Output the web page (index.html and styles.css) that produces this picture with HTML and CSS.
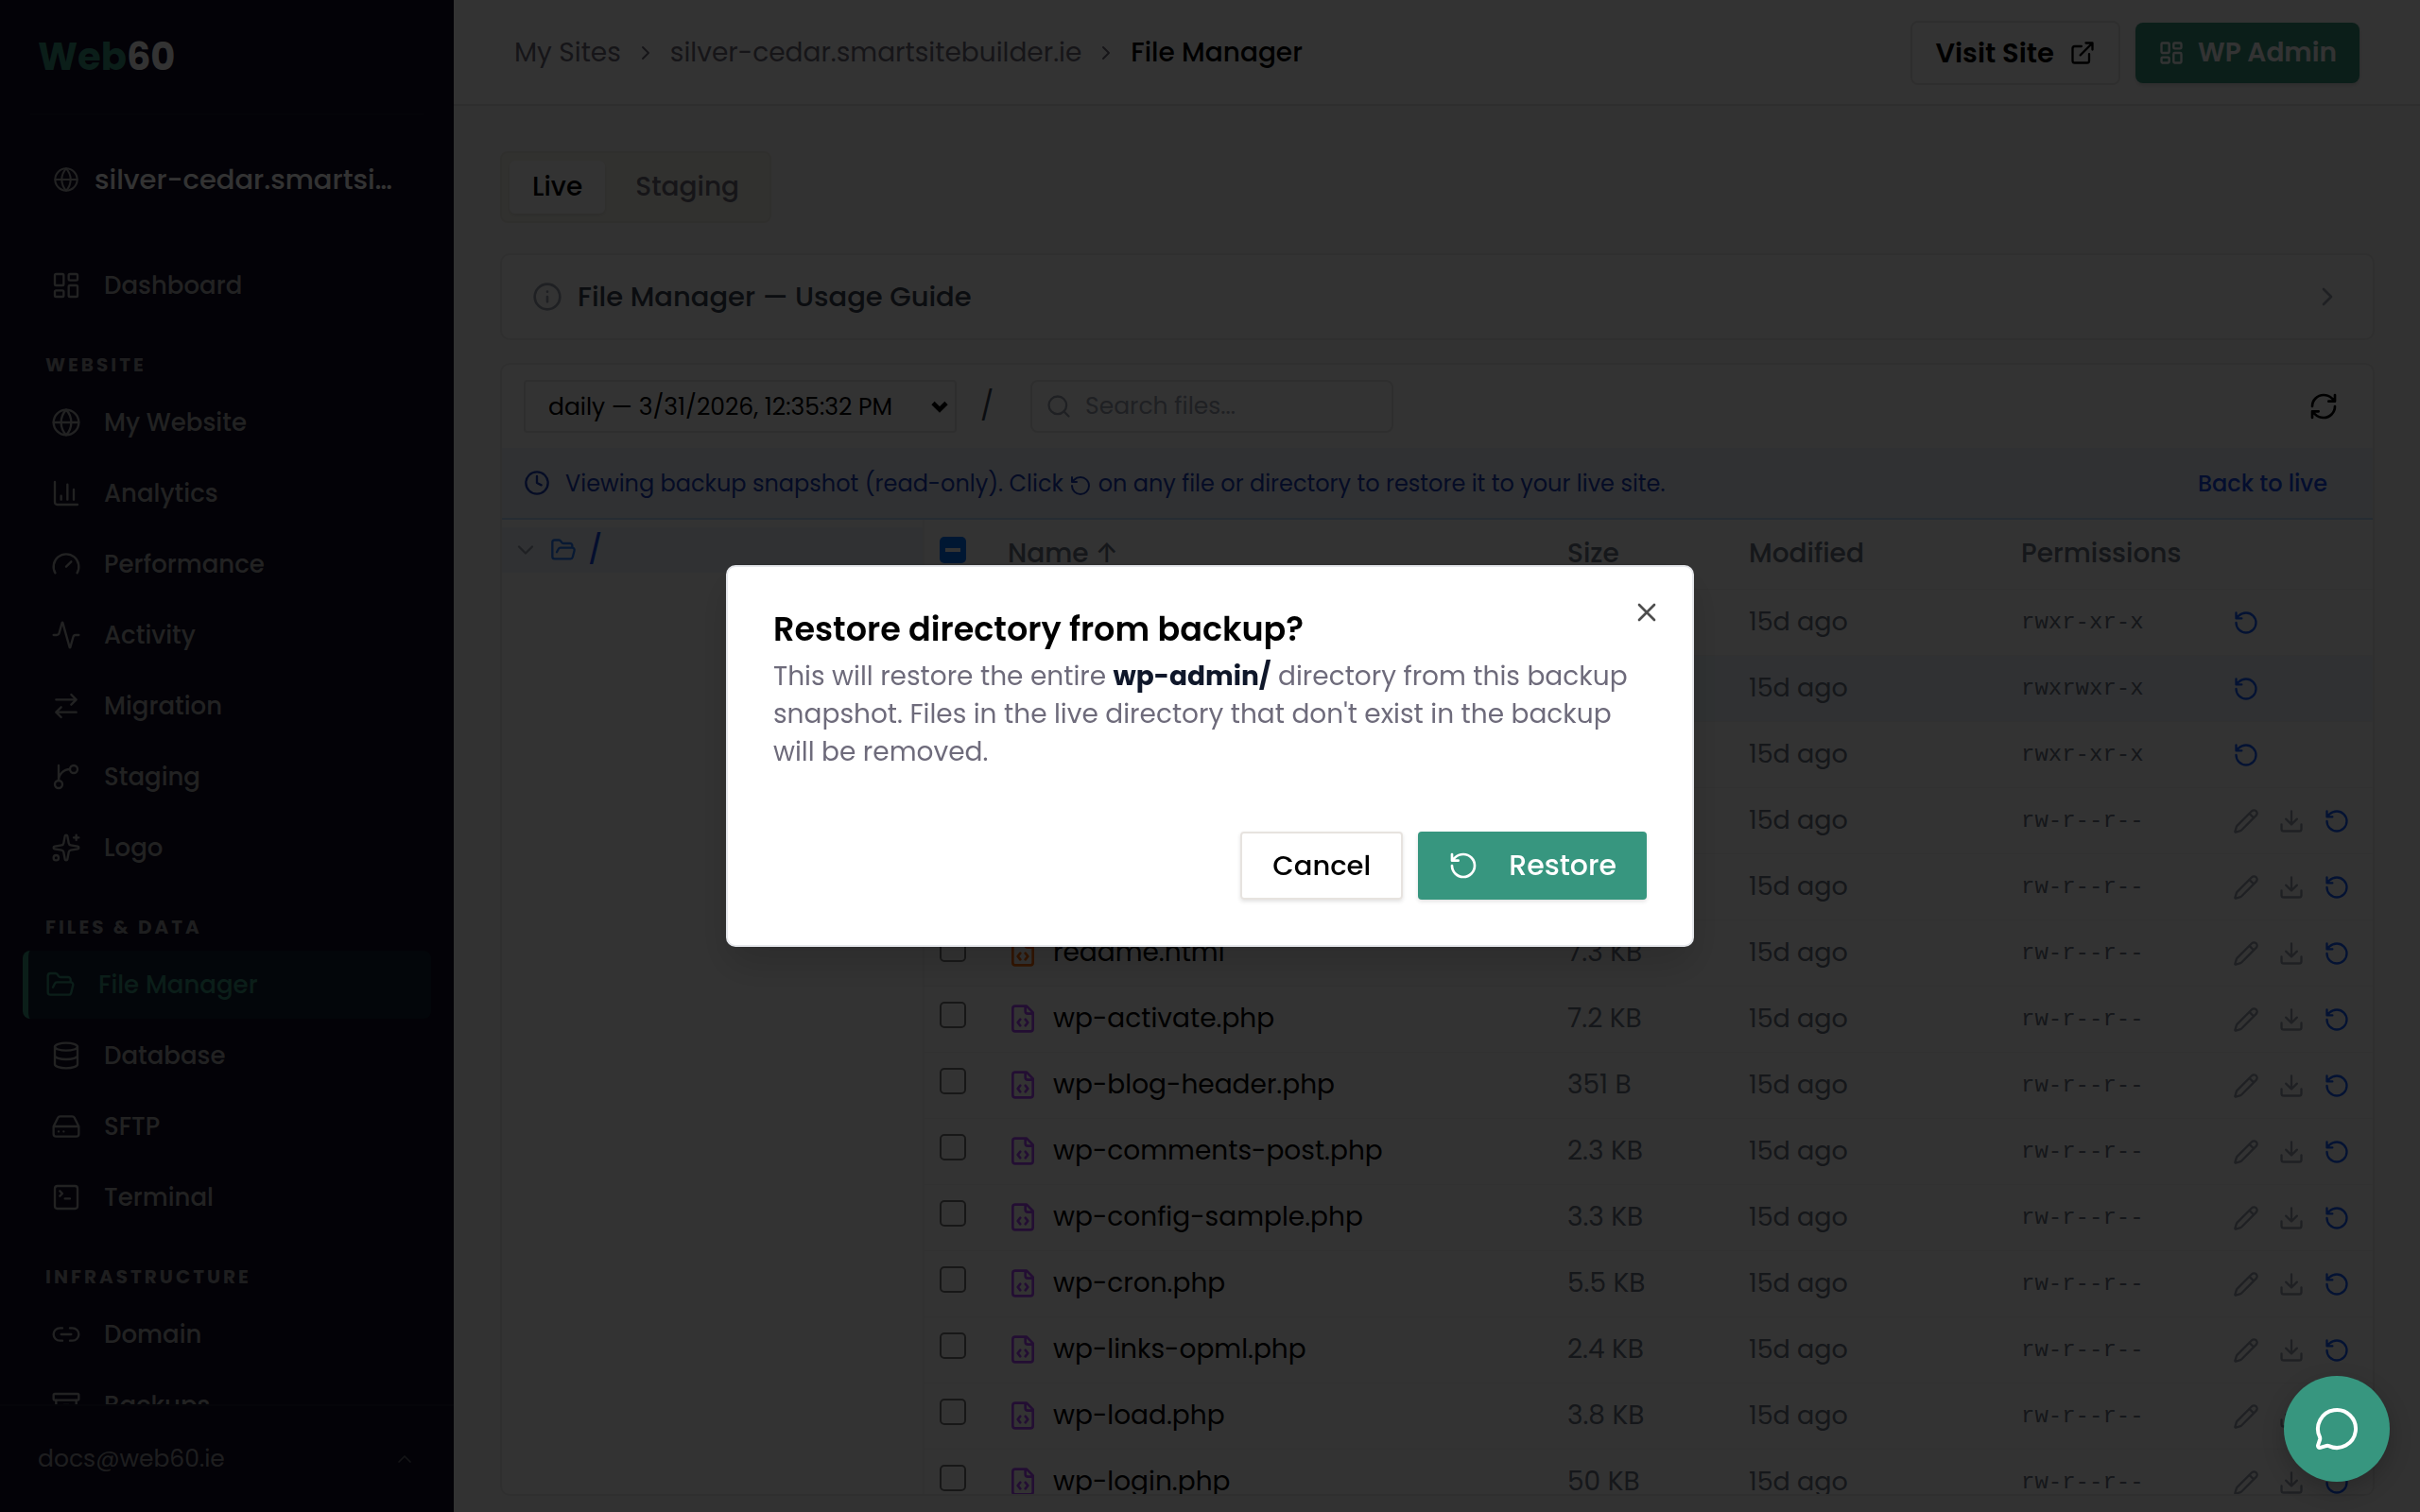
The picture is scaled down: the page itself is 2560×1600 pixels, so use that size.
FILE: index.html
```html
<!DOCTYPE html>
<html lang="en">
<head>
<meta charset="utf-8">
<meta name="viewport" content="width=device-width, initial-scale=1">
<title>File Manager - Web60</title>
<link rel="stylesheet" href="styles.css">
</head>
<body>
<svg class="sprite" aria-hidden="true">
  <symbol id="dashboard" viewBox="0 0 24 24"><rect x="3" y="3" width="7" height="9" rx="1"/><rect x="14" y="3" width="7" height="5" rx="1"/><rect x="14" y="12" width="7" height="9" rx="1"/><rect x="3" y="16" width="7" height="5" rx="1"/></symbol>
  <symbol id="globe" viewBox="0 0 24 24"><circle cx="12" cy="12" r="10"/><path d="M12 2a14.5 14.5 0 0 0 0 20 14.5 14.5 0 0 0 0-20M2 12h20"/></symbol>
  <symbol id="chart" viewBox="0 0 24 24"><path d="M3 3v16a2 2 0 0 0 2 2h16M18 17V9M13 17V5M8 17v-3"/></symbol>
  <symbol id="gauge" viewBox="0 0 24 24"><path d="m12 14 4-4M3.34 19a10 10 0 1 1 17.32 0"/></symbol>
  <symbol id="activity" viewBox="0 0 24 24"><path d="M22 12h-2.48a2 2 0 0 0-1.93 1.46l-2.35 8.36a.25.25 0 0 1-.48 0L9.24 2.18a.25.25 0 0 0-.48 0l-2.35 8.36A2 2 0 0 1 4.49 12H2"/></symbol>
  <symbol id="transfer" viewBox="0 0 24 24"><path d="m16 3 4 4-4 4M20 7H4M8 21l-4-4 4-4M4 17h16"/></symbol>
  <symbol id="branch" viewBox="0 0 24 24"><path d="M15 6a9 9 0 0 0-9 9V3"/><circle cx="18" cy="6" r="3"/><circle cx="6" cy="18" r="3"/></symbol>
  <symbol id="sparkles" viewBox="0 0 24 24"><path d="M11.017 2.814a1 1 0 0 1 1.966 0l1.051 5.558a2 2 0 0 0 1.594 1.594l5.558 1.051a1 1 0 0 1 0 1.966l-5.558 1.051a2 2 0 0 0-1.594 1.594l-1.051 5.558a1 1 0 0 1-1.966 0l-1.051-5.558a2 2 0 0 0-1.594-1.594l-5.558-1.051a1 1 0 0 1 0-1.966l5.558-1.051a2 2 0 0 0 1.594-1.594zM20 2v4M22 4h-4"/><circle cx="4" cy="20" r="2"/></symbol>
  <symbol id="folder" viewBox="0 0 24 24"><path d="m6 14 1.5-2.9A2 2 0 0 1 9.24 10H20a2 2 0 0 1 1.94 2.5l-1.54 6a2 2 0 0 1-1.95 1.5H4a2 2 0 0 1-2-2V5a2 2 0 0 1 2-2h3.9a2 2 0 0 1 1.69.9l.81 1.2a2 2 0 0 0 1.67.9H18a2 2 0 0 1 2 2v2"/></symbol>
  <symbol id="database" viewBox="0 0 24 24"><ellipse cx="12" cy="5" rx="9" ry="3"/><path d="M3 5V19A9 3 0 0 0 21 19V5M3 12A9 3 0 0 0 21 12"/></symbol>
  <symbol id="drive" viewBox="0 0 24 24"><path d="M22 12H2M5.45 5.11 2 12v6a2 2 0 0 0 2 2h16a2 2 0 0 0 2-2v-6l-3.45-6.89A2 2 0 0 0 16.76 4H7.24a2 2 0 0 0-1.79 1.11zM6 16h.01M10 16h.01"/></symbol>
  <symbol id="terminal" viewBox="0 0 24 24"><path d="m7 11 2-2-2-2M11 13h4"/><rect x="3" y="3" width="18" height="18" rx="2"/></symbol>
  <symbol id="link" viewBox="0 0 24 24"><path d="M9 17H7A5 5 0 0 1 7 7h2M15 7h2a5 5 0 1 1 0 10h-2M8 12h8"/></symbol>
  <symbol id="archive" viewBox="0 0 24 24"><rect x="2" y="3" width="20" height="5" rx="1"/><path d="M4 8v11a2 2 0 0 0 2 2h12a2 2 0 0 0 2-2V8M10 12h4"/></symbol>
  <symbol id="up" viewBox="0 0 24 24"><path d="m18 15-6-6-6 6"/></symbol>
  <symbol id="down" viewBox="0 0 24 24"><path d="m6 9 6 6 6-6"/></symbol>
  <symbol id="right" viewBox="0 0 24 24"><path d="m9 18 6-6-6-6"/></symbol>
  <symbol id="external" viewBox="0 0 24 24"><path d="M15 3h6v6M10 14 21 3M18 13v6a2 2 0 0 1-2 2H5a2 2 0 0 1-2-2V8a2 2 0 0 1 2-2h6"/></symbol>
  <symbol id="info" viewBox="0 0 24 24"><circle cx="12" cy="12" r="10"/><path d="M12 16v-4M12 8h.01"/></symbol>
  <symbol id="search" viewBox="0 0 24 24"><circle cx="11" cy="11" r="8"/><path d="m21 21-4.34-4.34"/></symbol>
  <symbol id="refresh" viewBox="0 0 24 24"><path d="M3 12a9 9 0 0 1 9-9 9.75 9.75 0 0 1 6.74 2.74L21 8M21 3v5h-5M21 12a9 9 0 0 1-9 9 9.75 9.75 0 0 1-6.74-2.74L3 16M8 16H3v5"/></symbol>
  <symbol id="clock" viewBox="0 0 24 24"><circle cx="12" cy="12" r="10"/><path d="M12 6v6l4 2"/></symbol>
  <symbol id="restore" viewBox="0 0 24 24"><path d="M3 12a9 9 0 1 0 9-9 9.75 9.75 0 0 0-6.74 2.74L3 8M3 3v5h5"/></symbol>
  <symbol id="code" viewBox="0 0 24 24"><path d="M10 12.5 8 15l2 2.5M14 12.5l2 2.5-2 2.5M14 2v4a2 2 0 0 0 2 2h4M15 2H6a2 2 0 0 0-2 2v16a2 2 0 0 0 2 2h12a2 2 0 0 0 2-2V7z"/></symbol>
  <symbol id="pencil" viewBox="0 0 24 24"><path d="M21.174 6.812a1 1 0 0 0-3.986-3.987L3.842 16.174a2 2 0 0 0-.5.83l-1.321 4.352a.5.5 0 0 0 .623.622l4.353-1.32a2 2 0 0 0 .83-.497zM15 5l4 4"/></symbol>
  <symbol id="download" viewBox="0 0 24 24"><path d="M12 15V3M21 15v4a2 2 0 0 1-2 2H5a2 2 0 0 1-2-2v-4M7 10l5 5 5-5"/></symbol>
  <symbol id="close" viewBox="0 0 24 24"><path d="M18 6 6 18M6 6l12 12"/></symbol>
  <symbol id="chat" viewBox="0 0 24 24"><path d="M2.992 16.342a2 2 0 0 1 .094 1.167l-1.065 3.29a1 1 0 0 0 1.236 1.168l3.413-.998a2 2 0 0 1 1.099.092 10 10 0 1 0-4.777-4.719"/></symbol>
</svg>

<div class="app">
  <aside class="sidebar">
    <a class="logo" href="#"><span class="logo-accent">Web</span>60</a>
    <a class="site" href="#"><svg class="icon icon-sm"><use href="#globe"/></svg><span class="site-name">silver-cedar.smartsi…</span></a>
    <nav class="nav" aria-label="Site">
      <a class="nav-item" href="#"><svg class="icon"><use href="#dashboard"/></svg>Dashboard</a>
      <h2 class="nav-label">WEBSITE</h2>
      <a class="nav-item" href="#"><svg class="icon"><use href="#globe"/></svg>My Website</a>
      <a class="nav-item" href="#"><svg class="icon"><use href="#chart"/></svg>Analytics</a>
      <a class="nav-item" href="#"><svg class="icon"><use href="#gauge"/></svg>Performance</a>
      <a class="nav-item" href="#"><svg class="icon"><use href="#activity"/></svg>Activity</a>
      <a class="nav-item" href="#"><svg class="icon"><use href="#transfer"/></svg>Migration</a>
      <a class="nav-item" href="#"><svg class="icon"><use href="#branch"/></svg>Staging</a>
      <a class="nav-item" href="#"><svg class="icon"><use href="#sparkles"/></svg>Logo</a>
      <h2 class="nav-label">FILES &amp; DATA</h2>
      <a class="nav-item active" href="#" aria-current="page"><svg class="icon"><use href="#folder"/></svg>File Manager</a>
      <a class="nav-item" href="#"><svg class="icon"><use href="#database"/></svg>Database</a>
      <a class="nav-item" href="#"><svg class="icon"><use href="#drive"/></svg>SFTP</a>
      <a class="nav-item" href="#"><svg class="icon"><use href="#terminal"/></svg>Terminal</a>
      <h2 class="nav-label">INFRASTRUCTURE</h2>
      <a class="nav-item" href="#"><svg class="icon"><use href="#link"/></svg>Domain</a>
      <a class="nav-item" href="#"><svg class="icon"><use href="#archive"/></svg>Backups</a>
    </nav>
    <button class="account" type="button">docs@web60.ie<svg class="icon icon-xs"><use href="#up"/></svg></button>
  </aside>

  <div class="page">
    <header class="topbar">
      <nav class="crumbs" aria-label="Breadcrumb">
        <a href="#">My Sites</a><svg class="icon icon-xs"><use href="#right"/></svg>
        <a href="#">silver-cedar.smartsitebuilder.ie</a><svg class="icon icon-xs"><use href="#right"/></svg>
        <span class="crumb-current">File Manager</span>
      </nav>
      <div class="top-actions">
        <a class="btn-visit" href="#">Visit Site<svg class="icon icon-sm"><use href="#external"/></svg></a>
        <a class="btn-admin" href="#"><svg class="icon icon-sm"><use href="#dashboard"/></svg>WP Admin</a>
      </div>
    </header>

    <main class="content">
      <div class="tabs">
        <button class="tab selected" type="button">Live</button>
        <button class="tab" type="button">Staging</button>
      </div>
      <button class="guide" type="button"><svg class="icon"><use href="#info"/></svg>File Manager — Usage Guide<svg class="icon guide-arrow"><use href="#right"/></svg></button>

      <section class="files">
        <div class="toolbar">
          <div class="picker">
            <select class="picker-select" aria-label="Snapshot"><option>daily — 3/31/2026, 12:35:32 PM</option></select>
            <svg class="icon picker-arrow"><use href="#down"/></svg>
          </div>
          <a class="path" href="#">/</a>
          <label class="search"><svg class="icon icon-sm"><use href="#search"/></svg><input class="search-input" type="text" placeholder="Search files..." aria-label="Search files"></label>
          <button class="refresh" type="button" aria-label="Refresh"><svg class="icon"><use href="#refresh"/></svg></button>
        </div>
        <div class="notice">
          <svg class="icon icon-sm"><use href="#clock"/></svg>
          <p class="notice-text">Viewing backup snapshot (read-only). Click <svg class="icon icon-xs"><use href="#restore"/></svg> on any file or directory to restore it to your live site.</p>
          <button class="notice-link" type="button">Back to live</button>
        </div>
        <div class="browser">
          <div class="tree">
            <a class="tree-row" href="#"><svg class="icon icon-sm tree-arrow"><use href="#down"/></svg><svg class="icon icon-sm tree-folder"><use href="#folder"/></svg>/</a>
          </div>
          <div class="list">
            <table class="table">
              <colgroup><col class="c-check"><col><col class="c-size"><col class="c-date"><col class="c-perm"><col class="c-act"></colgroup>
              <thead>
                <tr><th><input class="check partial" type="checkbox" aria-label="Select all"></th><th>Name ↑</th><th>Size</th><th>Modified</th><th>Permissions</th><th></th></tr>
              </thead>
              <tbody>
                <tr><td><input class="check" type="checkbox" aria-label="Select wp-admin"></td><td><a class="name dir" href="#"><svg class="icon"><use href="#folder"/></svg>wp-admin</a></td><td class="size">—</td><td>15d ago</td><td class="mono">rwxr-xr-x</td><td><div class="acts"><button class="act blue" aria-label="Restore"><svg class="icon icon-sm"><use href="#restore"/></svg></button></div></td></tr>
                <tr class="hover"><td><input class="check" type="checkbox" aria-label="Select wp-content"></td><td><a class="name dir" href="#"><svg class="icon"><use href="#folder"/></svg>wp-content</a></td><td class="size">—</td><td>15d ago</td><td class="mono">rwxrwxr-x</td><td><div class="acts"><button class="act blue" aria-label="Restore"><svg class="icon icon-sm"><use href="#restore"/></svg></button></div></td></tr>
                <tr><td><input class="check" type="checkbox" aria-label="Select wp-includes"></td><td><a class="name dir" href="#"><svg class="icon"><use href="#folder"/></svg>wp-includes</a></td><td class="size">—</td><td>15d ago</td><td class="mono">rwxr-xr-x</td><td><div class="acts"><button class="act blue" aria-label="Restore"><svg class="icon icon-sm"><use href="#restore"/></svg></button></div></td></tr>
                <tr><td><input class="check" type="checkbox" aria-label="Select index.php"></td><td><a class="name" href="#"><svg class="icon"><use href="#code"/></svg>index.php</a></td><td class="size">405 B</td><td>15d ago</td><td class="mono">rw-r--r--</td><td><div class="acts"><button class="act" aria-label="Edit"><svg class="icon icon-sm"><use href="#pencil"/></svg></button><button class="act" aria-label="Download"><svg class="icon icon-sm"><use href="#download"/></svg></button><button class="act blue" aria-label="Restore"><svg class="icon icon-sm"><use href="#restore"/></svg></button></div></td></tr>
                <tr><td><input class="check" type="checkbox" aria-label="Select license.txt"></td><td><a class="name" href="#"><svg class="icon"><use href="#code"/></svg>license.txt</a></td><td class="size">19 KB</td><td>15d ago</td><td class="mono">rw-r--r--</td><td><div class="acts"><button class="act" aria-label="Edit"><svg class="icon icon-sm"><use href="#pencil"/></svg></button><button class="act" aria-label="Download"><svg class="icon icon-sm"><use href="#download"/></svg></button><button class="act blue" aria-label="Restore"><svg class="icon icon-sm"><use href="#restore"/></svg></button></div></td></tr>
                <tr><td><input class="check" type="checkbox" aria-label="Select readme.html"></td><td><a class="name html" href="#"><svg class="icon"><use href="#code"/></svg>readme.html</a></td><td class="size">7.3 KB</td><td>15d ago</td><td class="mono">rw-r--r--</td><td><div class="acts"><button class="act" aria-label="Edit"><svg class="icon icon-sm"><use href="#pencil"/></svg></button><button class="act" aria-label="Download"><svg class="icon icon-sm"><use href="#download"/></svg></button><button class="act blue" aria-label="Restore"><svg class="icon icon-sm"><use href="#restore"/></svg></button></div></td></tr>
                <tr><td><input class="check" type="checkbox" aria-label="Select wp-activate.php"></td><td><a class="name" href="#"><svg class="icon"><use href="#code"/></svg>wp-activate.php</a></td><td class="size">7.2 KB</td><td>15d ago</td><td class="mono">rw-r--r--</td><td><div class="acts"><button class="act" aria-label="Edit"><svg class="icon icon-sm"><use href="#pencil"/></svg></button><button class="act" aria-label="Download"><svg class="icon icon-sm"><use href="#download"/></svg></button><button class="act blue" aria-label="Restore"><svg class="icon icon-sm"><use href="#restore"/></svg></button></div></td></tr>
                <tr><td><input class="check" type="checkbox" aria-label="Select wp-blog-header.php"></td><td><a class="name" href="#"><svg class="icon"><use href="#code"/></svg>wp-blog-header.php</a></td><td class="size">351 B</td><td>15d ago</td><td class="mono">rw-r--r--</td><td><div class="acts"><button class="act" aria-label="Edit"><svg class="icon icon-sm"><use href="#pencil"/></svg></button><button class="act" aria-label="Download"><svg class="icon icon-sm"><use href="#download"/></svg></button><button class="act blue" aria-label="Restore"><svg class="icon icon-sm"><use href="#restore"/></svg></button></div></td></tr>
                <tr><td><input class="check" type="checkbox" aria-label="Select wp-comments-post.php"></td><td><a class="name" href="#"><svg class="icon"><use href="#code"/></svg>wp-comments-post.php</a></td><td class="size">2.3 KB</td><td>15d ago</td><td class="mono">rw-r--r--</td><td><div class="acts"><button class="act" aria-label="Edit"><svg class="icon icon-sm"><use href="#pencil"/></svg></button><button class="act" aria-label="Download"><svg class="icon icon-sm"><use href="#download"/></svg></button><button class="act blue" aria-label="Restore"><svg class="icon icon-sm"><use href="#restore"/></svg></button></div></td></tr>
                <tr><td><input class="check" type="checkbox" aria-label="Select wp-config-sample.php"></td><td><a class="name" href="#"><svg class="icon"><use href="#code"/></svg>wp-config-sample.php</a></td><td class="size">3.3 KB</td><td>15d ago</td><td class="mono">rw-r--r--</td><td><div class="acts"><button class="act" aria-label="Edit"><svg class="icon icon-sm"><use href="#pencil"/></svg></button><button class="act" aria-label="Download"><svg class="icon icon-sm"><use href="#download"/></svg></button><button class="act blue" aria-label="Restore"><svg class="icon icon-sm"><use href="#restore"/></svg></button></div></td></tr>
                <tr><td><input class="check" type="checkbox" aria-label="Select wp-cron.php"></td><td><a class="name" href="#"><svg class="icon"><use href="#code"/></svg>wp-cron.php</a></td><td class="size">5.5 KB</td><td>15d ago</td><td class="mono">rw-r--r--</td><td><div class="acts"><button class="act" aria-label="Edit"><svg class="icon icon-sm"><use href="#pencil"/></svg></button><button class="act" aria-label="Download"><svg class="icon icon-sm"><use href="#download"/></svg></button><button class="act blue" aria-label="Restore"><svg class="icon icon-sm"><use href="#restore"/></svg></button></div></td></tr>
                <tr><td><input class="check" type="checkbox" aria-label="Select wp-links-opml.php"></td><td><a class="name" href="#"><svg class="icon"><use href="#code"/></svg>wp-links-opml.php</a></td><td class="size">2.4 KB</td><td>15d ago</td><td class="mono">rw-r--r--</td><td><div class="acts"><button class="act" aria-label="Edit"><svg class="icon icon-sm"><use href="#pencil"/></svg></button><button class="act" aria-label="Download"><svg class="icon icon-sm"><use href="#download"/></svg></button><button class="act blue" aria-label="Restore"><svg class="icon icon-sm"><use href="#restore"/></svg></button></div></td></tr>
                <tr><td><input class="check" type="checkbox" aria-label="Select wp-load.php"></td><td><a class="name" href="#"><svg class="icon"><use href="#code"/></svg>wp-load.php</a></td><td class="size">3.8 KB</td><td>15d ago</td><td class="mono">rw-r--r--</td><td><div class="acts"><button class="act" aria-label="Edit"><svg class="icon icon-sm"><use href="#pencil"/></svg></button><button class="act" aria-label="Download"><svg class="icon icon-sm"><use href="#download"/></svg></button><button class="act blue" aria-label="Restore"><svg class="icon icon-sm"><use href="#restore"/></svg></button></div></td></tr>
                <tr><td><input class="check" type="checkbox" aria-label="Select wp-login.php"></td><td><a class="name" href="#"><svg class="icon"><use href="#code"/></svg>wp-login.php</a></td><td class="size">50 KB</td><td>15d ago</td><td class="mono">rw-r--r--</td><td><div class="acts"><button class="act" aria-label="Edit"><svg class="icon icon-sm"><use href="#pencil"/></svg></button><button class="act" aria-label="Download"><svg class="icon icon-sm"><use href="#download"/></svg></button><button class="act blue" aria-label="Restore"><svg class="icon icon-sm"><use href="#restore"/></svg></button></div></td></tr>
              </tbody>
            </table>
          </div>
        </div>
      </section>
    </main>
  </div>
</div>

<div class="overlay">
  <div class="dialog" role="dialog" aria-modal="true" aria-labelledby="dialog-title">
    <button class="dialog-close" type="button" aria-label="Close"><svg class="icon"><use href="#close"/></svg></button>
    <h1 class="dialog-title" id="dialog-title">Restore directory from backup?</h1>
    <p class="dialog-text">This will restore the entire <strong>wp-admin/</strong> directory from this backup snapshot. Files in the live directory that don't exist in the backup will be removed.</p>
    <div class="dialog-actions">
      <button class="btn-cancel" type="button">Cancel</button>
      <button class="btn-restore" type="button"><svg class="icon"><use href="#restore"/></svg>Restore</button>
    </div>
  </div>
</div>
<button class="chat" type="button" aria-label="Chat"><svg class="icon icon-lg"><use href="#chat"/></svg></button>
</body>
</html>
```
FILE: styles.css
```css
* { box-sizing: border-box; }

body {
  margin: 0;
  font-family: Poppins, Inter, "Open Sans", sans-serif;
  font-size: 28px;
  color: #000;
}

a { color: inherit; text-decoration: none; }
button, input, select { font: inherit; color: inherit; }
button { padding: 0; border: 0; background: none; }
h1, h2, p { margin: 0; }

.sprite { position: absolute; width: 0; height: 0; }

.icon {
  flex: none;
  width: 32px;
  height: 32px;
  fill: none;
  stroke: currentColor;
  stroke-width: 2;
  stroke-linecap: round;
  stroke-linejoin: round;
}
.icon-sm { width: 28px; height: 28px; }
.icon-xs { width: 24px; height: 24px; }
.icon-lg { width: 48px; height: 48px; }

.app { display: flex; height: 100vh; overflow: hidden; }

/* Sidebar */
.sidebar {
  flex: none;
  display: flex;
  flex-direction: column;
  width: 480px;
  background: #0f0b24;
  color: #a8a8ac;
}
.sidebar .icon { stroke-width: 1.75; }
.logo {
  margin: 0 32px;
  padding: 0 8px;
  height: 122px;
  border-bottom: 2px solid #18152c;
  font-size: 40px;
  font-weight: 700;
  line-height: 120px;
  color: #fff;
}
.logo-accent { color: #37967f; }
.site {
  display: flex;
  align-items: center;
  gap: 16px;
  margin: 32px 24px 40px;
  padding: 0 24px 0 32px;
  height: 72px;
  font-size: 29px;
  font-weight: 500;
  color: #fff;
}
.site .icon { color: #a8a8ac; }
.site-name { overflow: hidden; text-overflow: ellipsis; white-space: nowrap; }
.nav {
  flex: 1;
  display: flex;
  flex-direction: column;
  gap: 3px;
  min-height: 0;
  padding: 0 24px;
  overflow: hidden;
}
.nav-item {
  flex: none;
  display: flex;
  align-items: center;
  gap: 24px;
  height: 72px;
  padding-left: 30px;
  border-radius: 8px;
  font-size: 26px;
  font-weight: 500;
}
.nav-item.active {
  padding-left: 18px;
  border-left: 6px solid #37967f;
  background: #132132;
  color: #37967f;
}
.nav-label {
  flex: none;
  height: 67px;
  padding: 31px 0 0 24px;
  font-size: 20px;
  font-weight: 700;
  line-height: 28px;
  letter-spacing: 3px;
  color: #949499;
}
.account {
  flex: none;
  display: flex;
  align-items: center;
  justify-content: space-between;
  height: 114px;
  padding: 0 40px;
  border-top: 2px solid #1d1a30;
  font-size: 25px;
  color: #97969c;
}
.account .icon { color: #66656f; }

/* Top bar */
.page { flex: 1; display: flex; flex-direction: column; min-width: 0; background: #fafafa; }
.topbar {
  flex: none;
  display: flex;
  align-items: center;
  justify-content: space-between;
  height: 112px;
  padding: 2px 64px 0;
  border-bottom: 2px solid #e7e5e4;
  background: #fff;
}
.crumbs { display: flex; align-items: center; gap: 14px; color: #6e6b7b; }
.crumb-current { font-weight: 500; color: #000; }
.top-actions { display: flex; align-items: center; gap: 16px; font-weight: 600; }
.btn-visit, .btn-admin { display: flex; align-items: center; border-radius: 8px; }
.btn-visit { gap: 16px; height: 68px; padding: 0 24px; border: 2px solid #e7e5e4; font-size: 29px; }
.btn-admin {
  gap: 14px;
  height: 64px;
  padding: 0 24px;
  background: #37967f;
  color: #fff;
  box-shadow: 0 2px 4px rgba(0, 0, 0, .15);
}

/* Content */
.content {
  flex: 1;
  display: flex;
  flex-direction: column;
  min-height: 0;
  padding: 48px 48px 17px 49px;
}
.tabs {
  align-self: flex-start;
  display: flex;
  padding: 8px;
  border: 2px solid #ece9e0;
  border-radius: 8px;
  background: #f6f5ec;
}
.tab { height: 56px; padding: 0 24px; border-radius: 6px; font-weight: 500; color: #6e6b7b; }
.tab + .tab { padding: 0 24px 0 32px; }
.tab.selected { background: #fff; color: #000; box-shadow: 0 2px 4px rgba(0, 0, 0, .1); }

.guide, .files { border: 2px solid #ebebeb; border-radius: 10px; background: #fdfdfd; }
.guide {
  flex: none;
  display: flex;
  align-items: center;
  gap: 16px;
  height: 92px;
  margin: 32px 0 24px;
  padding: 0 32px;
  font-size: 29px;
  font-weight: 500;
  color: #374151;
}
.guide .icon { color: #99a1af; }
.guide-arrow { margin-left: auto; }

.files {
  flex: 1;
  display: flex;
  flex-direction: column;
  min-height: 0;
  overflow: hidden;
}
.toolbar { flex: none; display: flex; align-items: center; height: 88px; padding: 0 36px 0 23px; }
.picker { position: relative; width: 458px; }
.picker-select {
  appearance: none;
  display: block;
  width: 100%;
  height: 56px;
  padding: 0 24px;
  border: 2px solid #e5e5e5;
  border-radius: 4px;
  background: #fff;
  font-size: 25px;
}
.picker-arrow { position: absolute; right: 4px; top: 14px; width: 28px; height: 28px; stroke-width: 4; stroke-linecap: butt; stroke-linejoin: miter; pointer-events: none; }
.path { width: 78px; padding-left: 25px; font-size: 30px; color: #374151; }
.search {
  display: flex;
  align-items: center;
  gap: 14px;
  width: 384px;
  height: 56px;
  padding: 0 14px;
  border: 2px solid #e5e5e5;
  border-radius: 8px;
  background: #fff;
  color: #99a1af;
}
.search-input { width: 100%; padding: 0; border: 0; outline: 0; background: none; font-size: 25px; }
.search-input::placeholder { color: #99a1af; }
.refresh { margin-left: auto; height: 32px; }

.notice {
  flex: none;
  display: flex;
  align-items: center;
  gap: 16px;
  height: 76px;
  padding: 0 48px 0 23px;
  border-bottom: 2px solid #bedbff;
  background: #eff6ff;
  font-size: 24px;
  color: #193cb8;
}
.notice-text { flex: 1; white-space: nowrap; }
.notice-text .icon { vertical-align: -6px; }
.notice-link { font-weight: 500; color: #1447e6; }

.browser { flex: 1; display: flex; min-height: 0; }
.tree { flex: none; width: 447px; padding-top: 8px; border-right: 2px solid #f3f3f3; }
.tree-row {
  display: flex;
  align-items: center;
  gap: 12px;
  height: 48px;
  padding-left: 11px;
  background: #eff6ff;
  font-size: 30px;
  font-weight: 500;
  color: #1447e6;
}
.tree-arrow { color: #99a1af; }
.tree-folder { color: #2b7fff; }

.list { flex: 1; min-width: 0; overflow: hidden; background: #fff; }
.table { width: 100%; border-collapse: collapse; table-layout: fixed; font-size: 27px; color: #6a7282; }
.c-check { width: 72px; }
.c-size { width: 192px; }
.c-date { width: 288px; }
.c-perm { width: 240px; }
.c-act { width: 148px; }
.table th, .table td { height: 70px; padding: 0 0 0 16px; text-align: left; }
.table th { height: 73px; background: #fcfcfc; font-size: 28px; font-weight: 500; }
.table tr { border-bottom: 1px solid #f5f5f5; }
.table tr > :last-child { padding-left: 0; }
.table .size { font-size: 28px; }
.table .mono { font-family: "Liberation Mono", monospace; font-size: 24px; }
.table .hover { background: #eff6ff; }

.check {
  appearance: none;
  display: block;
  width: 28px;
  height: 28px;
  margin: 0 0 8px;
  border: 2px solid #767676;
  border-radius: 5px;
  background: #fff;
}
.check.partial { border: 0; background: linear-gradient(#fff, #fff) center / 16px 4px no-repeat #0075ff; }

.name { display: flex; align-items: center; gap: 16px; color: #000; font-size: 28px; }
.name .icon { color: #ad46ff; }
.name.html .icon { color: #ff6900; }
.name.dir .icon { color: #2b7fff; }
.acts { display: flex; gap: 20px; }
.act { height: 28px; color: #99a1af; }
.act.blue { color: #155dfc; }

/* Dialog */
.overlay {
  position: fixed;
  inset: 0;
  display: grid;
  place-items: center;
  background: rgba(0, 0, 0, .8);
}
.dialog {
  position: relative;
  width: 1024px;
  padding: 48px;
  border: 2px solid #e5e7eb;
  border-radius: 10px;
  background: #fff;
  box-shadow: 0 20px 40px rgba(0, 0, 0, .15);
}
.dialog-close { position: absolute; right: 32px; top: 32px; height: 32px; color: #4d4d4d; }
.dialog-title { font-size: 35px; font-weight: 600; line-height: 36px; }
.dialog-text { margin: 12px 0 64px; font-size: 28px; line-height: 40px; color: #6e6b7b; }
.dialog-text strong { font-weight: 700; color: #0f172a; }
.dialog-actions { display: flex; justify-content: flex-end; gap: 16px; font-size: 29px; font-weight: 500; }
.btn-cancel, .btn-restore {
  display: flex;
  align-items: center;
  height: 72px;
  border-radius: 4px;
  box-shadow: 0 2px 4px rgba(0, 0, 0, .12);
}
.btn-cancel { padding: 0 32px; border: 2px solid #e7e3df; }
.btn-restore { gap: 32px; padding: 0 32px; background: #37967f; color: #fff; font-size: 30px; }

.chat {
  position: fixed;
  right: 32px;
  bottom: 32px;
  display: grid;
  place-items: center;
  width: 112px;
  height: 112px;
  border-radius: 50%;
  background: #37967f;
  color: #fff;
  box-shadow: 0 8px 24px rgba(0, 0, 0, .2);
}
```
